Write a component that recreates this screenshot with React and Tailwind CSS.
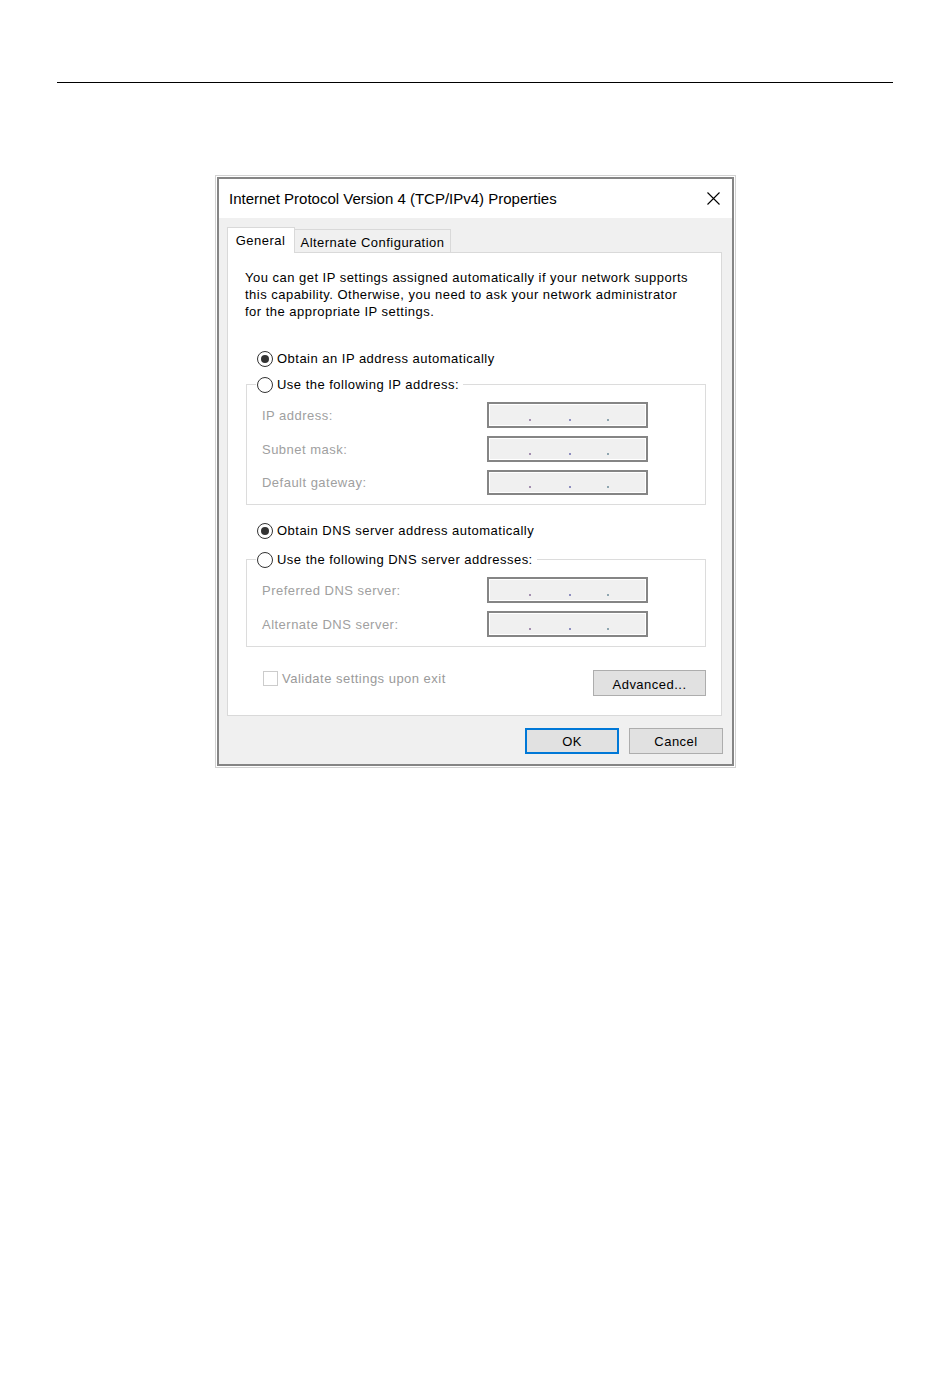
import React from "react";

const Radio = ({ checked }) => (
  <span className="flex h-4 w-4 shrink-0 items-center justify-center rounded-full border border-[#333333] bg-white">
    {checked && <span className="h-2 w-2 rounded-full bg-[#333333]" />}
  </span>
);

const RadioRow = ({ checked, children }) => (
  <div className="flex h-[17px] items-center gap-[4px] text-black">
    <Radio checked={checked} />
    <span>{children}</span>
  </div>
);

// greyed-out IP input with its three separator dots
const IpBox = ({ tall }) => (
  <div className={`flex w-[161px] ${tall ? "h-[26px]" : "h-[25px]"} border-2 border-[#858585] bg-white p-px`}>
    <div className="flex flex-1 items-end bg-[#f0f0f0] pb-[4px]">
      <span className="ml-[39px] h-[2px] w-[2px] bg-[#a48fb0]" />
      <span className="ml-[38px] h-[2px] w-[2px] bg-[#8f8fc0]" />
      <span className="ml-[36px] h-[2px] w-[2px] bg-[#8fa6b0]" />
    </div>
  </div>
);

const FieldRow = ({ label, tall }) => (
  <div className="flex items-center">
    <span className="w-[240px] pl-[15px] text-[#a0a0a0]">{label}</span>
    <IpBox tall={tall} />
  </div>
);

const GroupBox = ({ legend, rows }) => (
  <fieldset className="ml-[18px] mr-[15px] border border-[#dcdcdc] pb-[9px] pt-[9px]">
    <legend className="ml-[9px] bg-white pl-px pr-[4px]">
      <RadioRow>{legend}</RadioRow>
    </legend>
    <div className="flex flex-col gap-[8px]">
      {rows.map((r) => (
        <FieldRow key={r.label} label={r.label} tall={r.tall} />
      ))}
    </div>
  </fieldset>
);

export default function App() {
  return (
    <div className="h-[1378px] w-[950px] bg-white pt-[82px] font-['Liberation_Sans',Arial,sans-serif] text-[13px] leading-[17px] tracking-[0.48px]">
      <div className="ml-[57px] h-px w-[836px] bg-black" />

      {/* dialog window */}
      <div className="ml-[215px] mt-[92px] w-[521px] border border-[#d2d2d2] bg-white p-px">
        <div className="border-2 border-[#858585]">
          {/* title bar */}
          <div className="flex h-[39px] items-center justify-between bg-white pl-[10px] pr-[12px]">
            <span className="text-[15px] tracking-normal text-black">Internet Protocol Version 4 (TCP/IPv4) Properties</span>
            <svg width="13" height="13" viewBox="0 0 13 13">
              <path d="M0.5 0.5 L12.5 12.5 M12.5 0.5 L0.5 12.5" stroke="#000" strokeWidth="1.1" fill="none" />
            </svg>
          </div>

          <div className="h-[546px] bg-[#f0f0f0] pl-[8px] pr-[9px] pt-[9px]">
            {/* tabs */}
            <div className="flex h-[25px] items-end">
              <div className="relative z-10 -mb-px flex h-[26px] w-[68px] items-center justify-center border border-b-0 border-[#d9d9d9] bg-white pr-px text-black">
                General
              </div>
              <div className="-ml-px flex h-[23px] w-[157px] items-center justify-center border border-b-0 border-[#d9d9d9] bg-[#f0f0f0] pt-[2px] text-black">
                Alternate Configuration
              </div>
            </div>

            {/* tab page */}
            <div className="h-[464px] w-[495px] border border-[#d9d9d9] bg-white">
              <p className="pl-[17px] pt-[16px] text-black">
                You can get IP settings assigned automatically if your network supports
                <br />
                this capability. Otherwise, you need to ask your network administrator
                <br />
                for the appropriate IP settings.
              </p>

              <div className="ml-[29px] mt-[30px]">
                <RadioRow checked>Obtain an IP address automatically</RadioRow>
              </div>

              <div className="mt-[9px]">
                <GroupBox
                  legend="Use the following IP address:"
                  rows={[
                    { label: "IP address:", tall: true },
                    { label: "Subnet mask:", tall: true },
                    { label: "Default gateway:", tall: false },
                  ]}
                />
              </div>

              <div className="ml-[29px] mt-[17px]">
                <RadioRow checked>Obtain DNS server address automatically</RadioRow>
              </div>

              <div className="mt-[12px]">
                <GroupBox
                  legend="Use the following DNS server addresses:"
                  rows={[
                    { label: "Preferred DNS server:", tall: true },
                    { label: "Alternate DNS server:", tall: true },
                  ]}
                />
              </div>

              <div className="ml-[35px] mr-[15px] mt-[22px] flex items-start justify-between">
                <div className="flex items-center gap-[4px] pt-px">
                  <span className="h-[15px] w-[15px] border border-[#cccccc] bg-white" />
                  <span className="text-[#9a9a9a]">Validate settings upon exit</span>
                </div>
                <button className="mt-px h-[26px] w-[113px] border border-[#adadad] bg-[#e1e1e1] pt-[2px] text-black">
                  Advanced...
                </button>
              </div>
            </div>

            {/* dialog buttons */}
            <div className="mt-[12px] flex justify-end gap-[10px]">
              <button className="h-[26px] w-[94px] border-2 border-[#0078d7] bg-[#e1e1e1] text-black">OK</button>
              <button className="h-[26px] w-[94px] border border-[#adadad] bg-[#e1e1e1] text-black">Cancel</button>
            </div>
          </div>
        </div>
      </div>
    </div>
  );
}
